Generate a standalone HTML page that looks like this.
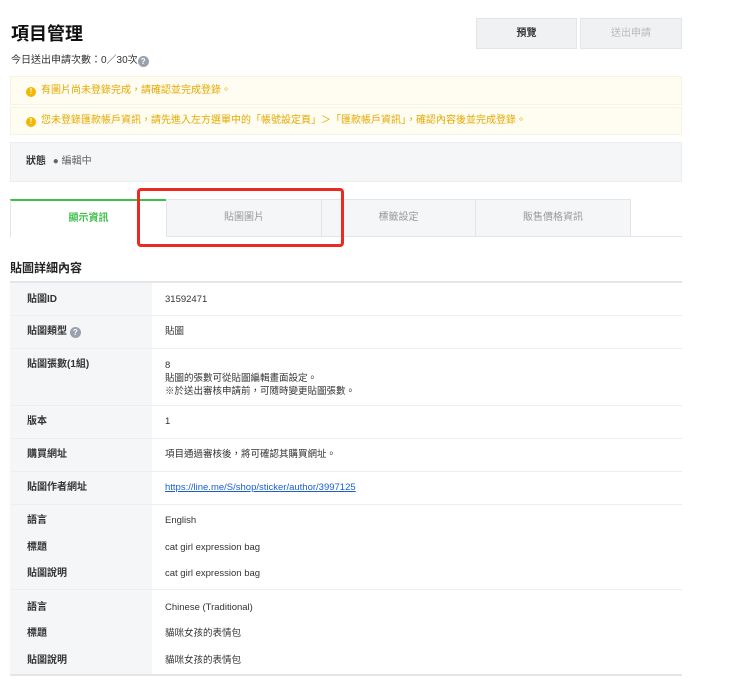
<!DOCTYPE html>
<html><head><meta charset="utf-8"><style>
*{margin:0;padding:0;box-sizing:border-box}
body{width:740px;height:690px;background:#fff;font-family:"Liberation Sans","Noto Sans CJK TC",sans-serif;color:#222;position:relative;overflow:hidden}
.a{position:absolute}
h1{position:absolute;left:11px;top:20px;font-size:18px;font-weight:bold;color:#111}
.sub{left:11px;top:51px;font-size:10px;color:#333}
.q{display:inline-block;width:11px;height:11px;border-radius:50%;background:#9aa0ad;color:#fff;font-size:8px;text-align:center;line-height:11px;font-weight:bold;vertical-align:-1px}
.btn{top:18px;height:31px;background:#f0f1f3;border:1px solid #e3e5e8;font-size:10px;text-align:center;line-height:29px}
.alert{left:10px;width:672px;background:#fffdf1;border:1px solid #f8f3dc;font-size:10px;color:#e5a800;padding-left:15px}
.alert i{display:inline-block;width:10px;height:10px;border-radius:50%;background:#f2b700;color:#fff;font-style:normal;font-size:8px;text-align:center;line-height:10px;font-weight:bold;margin-right:5px;vertical-align:-1px}
.tab{top:199px;height:38px;background:#f5f6f7;border:1px solid #e3e5e8;font-size:10px;color:#999;text-align:center;line-height:36px}
.row{position:absolute;left:10px;width:672px;border-bottom:1px solid #eceef0}
.lab{position:absolute;left:17px;font-size:10px;font-weight:bold;color:#333;line-height:12px}
.val{position:absolute;left:155px;font-size:9.5px;color:#333;line-height:12px}
</style></head><body>
<h1>項目管理</h1>
<div class="a sub">今日送出申請次數：0／30次<span class="q">?</span></div>
<div class="a btn" style="left:476px;width:101px;font-weight:bold;color:#333">預覽</div>
<div class="a btn" style="left:580px;width:102px;color:#bbb">送出申請</div>
<div class="a alert" style="top:76px;height:29px;line-height:27px"><i>!</i>有圖片尚未登錄完成，請確認並完成登錄。</div>
<div class="a alert" style="top:107px;height:28px;line-height:26px"><i>!</i>您未登錄匯款帳戶資訊，請先進入左方選單中的「帳號設定頁」＞「匯款帳戶資訊」，確認內容後並完成登錄。</div>
<div class="a" style="left:10px;top:142px;width:672px;height:40px;background:#f5f6f7;border:1px solid #eceef0;font-size:10px;line-height:38px;padding-left:15px"><b style="color:#333">狀態</b> <span style="color:#666;margin-left:4px">● 編輯中</span></div>
<div class="a tab" style="left:10px;width:156px;background:#fff;border:none;border-top:2px solid #3dbf4a;color:#3dbf4a;font-weight:bold;border-left:1px solid #e3e5e8">顯示資訊</div>
<div class="a tab" style="left:166px;width:156px">貼圖圖片</div>
<div class="a tab" style="left:321px;width:155px">標籤設定</div>
<div class="a tab" style="left:475px;width:156px">販售價格資訊</div>
<div class="a" style="left:166px;top:236px;width:516px;height:1px;background:#e3e5e8"></div>
<div class="a" style="left:137px;top:188px;width:207px;height:59px;border:3px solid #ec2a20;border-radius:4px"></div>
<div class="a" style="left:10px;top:259px;font-size:12px;font-weight:bold;color:#222">貼圖詳細內容</div>
<div class="a" style="left:10px;top:281px;width:672px;height:2px;background:#e3e5e8"></div>
<div class="a" style="left:10px;top:283px;width:142px;height:393px;background:#f5f6f7"></div>
<div class="row" style="top:283px;height:33px"><span class="lab" style="top:11px">貼圖ID</span><span class="val" style="top:11px">31592471</span></div>
<div class="row" style="top:316px;height:33px"><span class="lab" style="top:10px">貼圖類型 <span class="q">?</span></span><span class="val" style="top:10px">貼圖</span></div>
<div class="row" style="top:349px;height:57px"><span class="lab" style="top:10px">貼圖張數(1組)</span><span class="val" style="top:10px;line-height:13px">8<br>貼圖的張數可從貼圖編輯畫面設定。<br>※於送出審核申請前，可隨時變更貼圖張數。</span></div>
<div class="row" style="top:406px;height:33px"><span class="lab" style="top:10px">版本</span><span class="val" style="top:10px">1</span></div>
<div class="row" style="top:439px;height:33px"><span class="lab" style="top:10px">購買網址</span><span class="val" style="top:10px">項目通過審核後，將可確認其購買網址。</span></div>
<div class="row" style="top:472px;height:33px"><span class="lab" style="top:10px">貼圖作者網址</span><span class="val" style="top:10px;color:#1a5fd0;text-decoration:underline">https://line.me/S/shop/sticker/author/3997125</span></div>
<div class="row" style="top:505px;height:85px"><span class="lab" style="top:10px">語言</span><span class="val" style="top:10px">English</span><span class="lab" style="top:37px">標題</span><span class="val" style="top:37px">cat girl expression bag</span><span class="lab" style="top:63px">貼圖說明</span><span class="val" style="top:63px">cat girl expression bag</span></div>
<div class="row" style="top:590px;height:86px;border-bottom:2px solid #e3e5e8"><span class="lab" style="top:12px">語言</span><span class="val" style="top:12px">Chinese (Traditional)</span><span class="lab" style="top:38px">標題</span><span class="val" style="top:38px">貓咪女孩的表情包</span><span class="lab" style="top:65px">貼圖說明</span><span class="val" style="top:65px">貓咪女孩的表情包</span></div>
</body></html>
